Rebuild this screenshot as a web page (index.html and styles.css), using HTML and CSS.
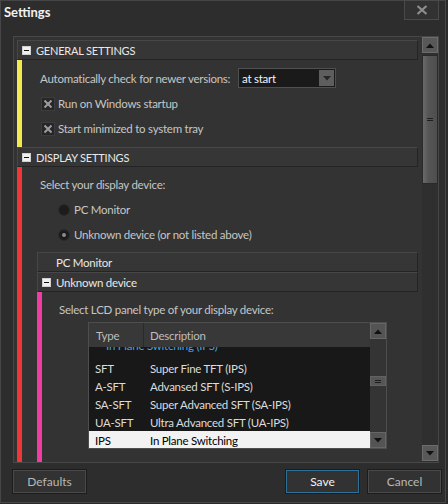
FILE: index.html
```html
<!DOCTYPE html>
<html>
<head>
<meta charset="utf-8">
<title>Settings</title>
<link rel="stylesheet" href="styles.css">
</head>
<body>
<div class="window">
  <div class="titlebar">
    <span class="title">Settings</span>
    <div class="close">
      <svg width="12" height="10" viewBox="0 0 12 10"><path d="M1.5 1 L10.5 9 M10.5 1 L1.5 9" stroke="#8e8e8e" stroke-width="2.2" fill="none"/></svg>
    </div>
  </div>

  <div class="panel">
    <div class="content">
      <div class="ghead"><span class="minus"></span><span class="htext">GENERAL SETTINGS</span></div>
      <div class="gbody general">
        <div class="row combo-row">
          <span class="lbl">Automatically check for newer versions:</span>
          <div class="combo">
            <span class="combo-text">at start</span>
            <span class="dd"><svg width="8" height="5" viewBox="0 0 8 5"><path d="M0 0 H8 L4 4.5 Z" fill="#262626"/></svg></span>
          </div>
        </div>
        <div class="row chk-row">
          <span class="cb"><svg width="10" height="10" viewBox="0 0 10 10"><path d="M1.5 1.5 L8.5 8.5 M8.5 1.5 L1.5 8.5" stroke="#9c9c9c" stroke-width="2" fill="none"/></svg></span>
          <span>Run on Windows startup</span>
        </div>
        <div class="row chk-row">
          <span class="cb"><svg width="10" height="10" viewBox="0 0 10 10"><path d="M1.5 1.5 L8.5 8.5 M8.5 1.5 L1.5 8.5" stroke="#9c9c9c" stroke-width="2" fill="none"/></svg></span>
          <span>Start minimized to system tray</span>
        </div>
      </div>

      <div class="ghead"><span class="minus"></span><span class="htext">DISPLAY SETTINGS</span></div>
      <div class="gbody display">
        <div class="row text-row">Select your display device:</div>
        <div class="row radio-row"><span class="radio"></span><span>PC Monitor</span></div>
        <div class="row radio-row"><span class="radio on"></span><span>Unknown device (or not listed above)</span></div>

        <div class="sub">
          <div class="shead plain">PC Monitor</div>
          <div class="shead"><span class="minus"></span><span>Unknown device</span></div>
          <div class="sbody">
            <div class="row lcd-row">Select LCD panel type of your display device:</div>
            <div class="list">
              <div class="list-main">
                <div class="lhead">
                  <div class="c1">Type</div>
                  <div class="c2">Description</div>
                </div>
                <div class="lbody">
                  <div class="lscroll">
                    <div class="grp"><span>In Plane Switching (IPS)</span><span class="gline"></span></div>
                    <div class="lrow"><div class="c1">SFT</div><div class="c2">Super Fine TFT (IPS)</div></div>
                    <div class="lrow"><div class="c1">A-SFT</div><div class="c2">Advansed SFT (S-IPS)</div></div>
                    <div class="lrow"><div class="c1">SA-SFT</div><div class="c2">Super Advanced SFT (SA-IPS)</div></div>
                    <div class="lrow"><div class="c1">UA-SFT</div><div class="c2">Ultra Advanced SFT (UA-IPS)</div></div>
                    <div class="lrow sel"><div class="c1">IPS</div><div class="c2">In Plane Switching</div></div>
                  </div>
                </div>
              </div>
              <div class="lsb">
                <div class="sbtn"><svg width="8" height="5" viewBox="0 0 8 5"><path d="M0 5 H8 L4 0.5 Z" fill="#111"/></svg></div>
                <div class="ltrack"><div class="lthumb"><span class="grip"></span></div></div>
                <div class="sbtn"><svg width="8" height="5" viewBox="0 0 8 5"><path d="M0 0 H8 L4 4.5 Z" fill="#111"/></svg></div>
              </div>
            </div>
          </div>
        </div>
      </div>
    </div>

    <div class="vscroll">
      <div class="sbtn main-btn"><svg width="8" height="5" viewBox="0 0 8 5"><path d="M0 5 H8 L4 0.5 Z" fill="#111"/></svg></div>
      <div class="vthumb"><span class="grip"></span></div>
      <div class="vtrack"></div>
      <div class="sbtn main-btn"><svg width="8" height="5" viewBox="0 0 8 5"><path d="M0 0 H8 L4 4.5 Z" fill="#111"/></svg></div>
    </div>
  </div>

  <div class="footer">
    <div class="btn">Defaults</div>
    <div class="right">
      <div class="btn primary">Save</div>
      <div class="btn">Cancel</div>
    </div>
  </div>
</div>
</body>
</html>
```

FILE: styles.css
```css
* { box-sizing: border-box; }

body {
  margin: 0;
  background: #2a2a2a;
  font-family: "Lato", "Noto Sans", sans-serif;
  font-size: 11.5px;
  letter-spacing: -0.25px;
  color: #c6c6c6;
}

.window {
  width: 446px;
  height: 503px;
  border: 1px solid #464646;
  background: #2d2d2d;
  display: flex;
  flex-direction: column;
}

/* title bar */
.titlebar {
  height: 35px;
  display: flex;
  justify-content: space-between;
  align-items: flex-start;
  flex: none;
}
.title {
  font-weight: bold;
  font-size: 13px;
  letter-spacing: 0;
  line-height: 18px;
  color: #f2f2f2;
  margin: 2px 0 0 3px;
}
.close {
  width: 35px;
  height: 20px;
  margin: -1px 6px 0 0;
  border: 1px solid #4a4a4a;
  background: #323232;
  display: flex;
  align-items: center;
  justify-content: center;
}

/* main panel */
.panel {
  width: 426px;
  height: 427px;
  margin-left: 12px;
  border: 1px solid #474747;
  background: #333333;
  display: flex;
  flex: none;
}
.content {
  flex: 1;
  overflow: hidden;
  padding: 3px 4px 0 3px;
}

.ghead, .shead {
  height: 20px;
  background: #363636;
  border: 1px solid #474747;
  border-right-color: #242424;
  border-bottom-color: #242424;
  display: flex;
  align-items: center;
  padding-left: 4px;
  color: #e8e8e8;
  flex: none;
}
.htext {
  font-size: 11px;
  letter-spacing: -0.2px;
}
.minus {
  width: 9px;
  height: 9px;
  background: #f0f0f0;
  border: 1px solid #cfcfcf;
  margin-right: 5px;
  position: relative;
  flex: none;
}
.minus::after {
  content: "";
  position: absolute;
  left: 1px;
  right: 1px;
  top: 3px;
  height: 1px;
  background: #111;
}

.gbody {
  border-left: 5px solid #f2e94c;
}
.general {
  height: 87px;
  padding: 8px 0 0 18px;
}
.display {
  border-left-color: #f23636;
  padding: 5px 0 0 15px;
}

.row {
  display: flex;
  align-items: center;
  white-space: nowrap;
}
.combo-row { height: 20px; margin-bottom: 3px; }
.lbl { width: 198px; flex: none; }
.combo {
  width: 98px;
  height: 20px;
  background: #1a1a1a;
  border: 1px solid #505050;
  display: flex;
  align-items: center;
  justify-content: space-between;
  padding: 0 1px 0 3px;
}
.combo-text { color: #eef4ff; }
.dd {
  width: 15px;
  height: 16px;
  background: #5e5e5e;
  display: flex;
  align-items: center;
  justify-content: center;
}

.chk-row { height: 25px; }
.cb {
  width: 14px;
  height: 14px;
  margin: 0 3px 0 1px;
  background: #262626;
  border: 1px solid #3d3d3d;
  display: flex;
  align-items: center;
  justify-content: center;
}

.text-row { height: 25px; margin-left: 3px; }
.radio-row { height: 25px; margin-left: 21px; }
.radio {
  width: 12px;
  height: 12px;
  border-radius: 50%;
  background: #1c1c1c;
  border: 1px solid #2c2c2c;
  margin-right: 4px;
  position: relative;
  flex: none;
}
.radio.on::after {
  content: "";
  position: absolute;
  left: 3px;
  top: 3px;
  width: 4px;
  height: 4px;
  border-radius: 50%;
  background: #8c8c8c;
}

.sub { margin-top: 5px; }
.shead.plain { padding-left: 18px; }
.sbody {
  border-left: 5px solid #f23ca2;
  padding-top: 5px;
  height: 200px;
}
.lcd-row { height: 25px; margin-left: 17px; }

/* list view */
.list {
  margin-left: 46px;
  width: 299px;
  height: 127px;
  border: 1px solid #4e4e4e;
  background: #181818;
  display: flex;
}
.list-main {
  flex: 1;
  display: flex;
  flex-direction: column;
  overflow: hidden;
}
.lhead {
  height: 24px;
  background: #383838;
  display: flex;
  align-items: center;
  color: #bdbdbd;
  flex: none;
}
.lhead .c1 {
  width: 55px;
  height: 100%;
  display: flex;
  align-items: center;
  padding-left: 7px;
  border-right: 1px solid #2a2a2a;
}
.lhead .c2 { padding-left: 6px; }
.lbody { flex: 1; overflow: hidden; }
.lscroll { margin-top: -12px; }
.grp {
  height: 20px;
  margin-bottom: 4px;
  display: flex;
  align-items: center;
  padding: 0 14px 0 17px;
  color: #3ea6e6;
}
.gline {
  flex: 1;
  height: 1px;
  background: #3a9ee0;
  margin-left: 4px;
}
.lrow {
  height: 18px;
  display: flex;
  align-items: center;
  color: #dcdcdc;
}
.lrow .c1 { width: 55px; padding-left: 6px; flex: none; }
.lrow .c2 { padding-left: 6px; white-space: nowrap; }
.lrow.sel { background: #f2f2f2; color: #000; }

.lsb {
  width: 16px;
  background: #343434;
  display: flex;
  flex-direction: column;
  flex: none;
}
.sbtn {
  width: 16px;
  height: 16px;
  background: #545454;
  border: 1px solid #666;
  display: flex;
  align-items: center;
  justify-content: center;
  flex: none;
}
.ltrack {
  flex: 1;
  display: flex;
  align-items: flex-start;
}
.lthumb {
  margin-top: 37px;
  width: 16px;
  height: 10px;
  background: #565656;
  border: 1px solid #626262;
  display: flex;
  align-items: center;
  justify-content: center;
}
.grip {
  width: 6px;
  height: 3px;
  border-top: 1px solid #1e1e1e;
  border-bottom: 1px solid #1e1e1e;
}

/* main scrollbar */
.vscroll {
  width: 16px;
  background: #2f2f2f;
  display: flex;
  flex-direction: column;
  flex: none;
}
.main-btn { background: #585858; border-color: #6c6c6c; }
.vthumb {
  margin-top: 2px;
  height: 129px;
  background: linear-gradient(to right, #6a6a6a, #555 40%, #4e4e4e);
  border: 1px solid #2a2a2a;
  display: flex;
  align-items: center;
  justify-content: center;
  flex: none;
}
.vtrack { flex: 1; }
.vscroll .main-btn:last-child { margin-bottom: 1px; }

/* footer */
.footer {
  display: flex;
  justify-content: space-between;
  margin-top: 6px;
  padding: 0 3px 0 11px;
}
.right { display: flex; gap: 7px; }
.btn {
  width: 75px;
  height: 25px;
  background: #323232;
  border: 1px solid #1c1c1c;
  box-shadow: inset 0 0 0 1px #4a4a4a;
  display: flex;
  align-items: center;
  justify-content: center;
  color: #b8b8b8;
  font-size: 12px;
  letter-spacing: 0;
}
.btn.primary {
  color: #f2f2f2;
  box-shadow: inset 0 0 0 1px #2f7196;
}
```
